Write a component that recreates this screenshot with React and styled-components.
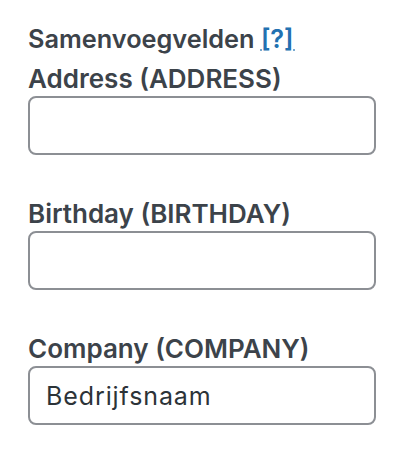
import React from "react";
import styled, { createGlobalStyle } from "styled-components";

const Global = createGlobalStyle`
  html, body { margin: 0; padding: 0; background: #ffffff; }
  body { font-family: Inter, "Liberation Sans", sans-serif; }
`;

const Panel = styled.div`
  display: flex;
  flex-direction: column;
  width: 348px;
  padding: 21px 0 0 28px;
  color: #3c434a;
`;

const Title = styled.div`
  font-size: 25.3px;
  font-weight: 600;
  line-height: 36px;
  margin-bottom: 4px;
`;

const Help = styled.a`
  position: relative;
  color: #2271b1;
  text-decoration: none;
  &::before,
  &::after {
    content: "";
    position: absolute;
    bottom: 3px;
    width: 2px;
    height: 2px;
    background: #2271b1;
    opacity: 0.6;
  }
  &::before { left: -1px; }
  &::after { right: -1px; }
`;

const Field = styled.div`
  display: flex;
  flex-direction: column;
  margin-bottom: ${(p) => p.$gap || 0}px;
`;

const Label = styled.label`
  font-size: 26px;
  font-weight: 600;
  line-height: 35px;
`;

const Input = styled.input`
  box-sizing: border-box;
  width: 348px;
  height: 59px;
  padding: 0 16px;
  border: 2px solid #8c8f94;
  border-radius: 8px;
  background: #fff;
  font-family: Inter, "Liberation Sans", sans-serif;
  font-size: 25px;
  letter-spacing: 0.9px;
  color: #2c3338;
  outline: none;
`;

const fields = [
  { label: "Address (ADDRESS)", value: "", gap: 41 },
  { label: "Birthday (BIRTHDAY)", value: "", gap: 41 },
  { label: "Company (COMPANY)", value: "Bedrijfsnaam", gap: 0 },
];

export default function App() {
  return (
    <>
      <Global />
      <Panel>
        <Title>
          Samenvoegvelden <Help href="#">[?]</Help>
        </Title>
        {fields.map((f) => (
          <Field key={f.label} $gap={f.gap}>
            <Label>{f.label}</Label>
            <Input type="text" defaultValue={f.value} />
          </Field>
        ))}
      </Panel>
    </>
  );
}
